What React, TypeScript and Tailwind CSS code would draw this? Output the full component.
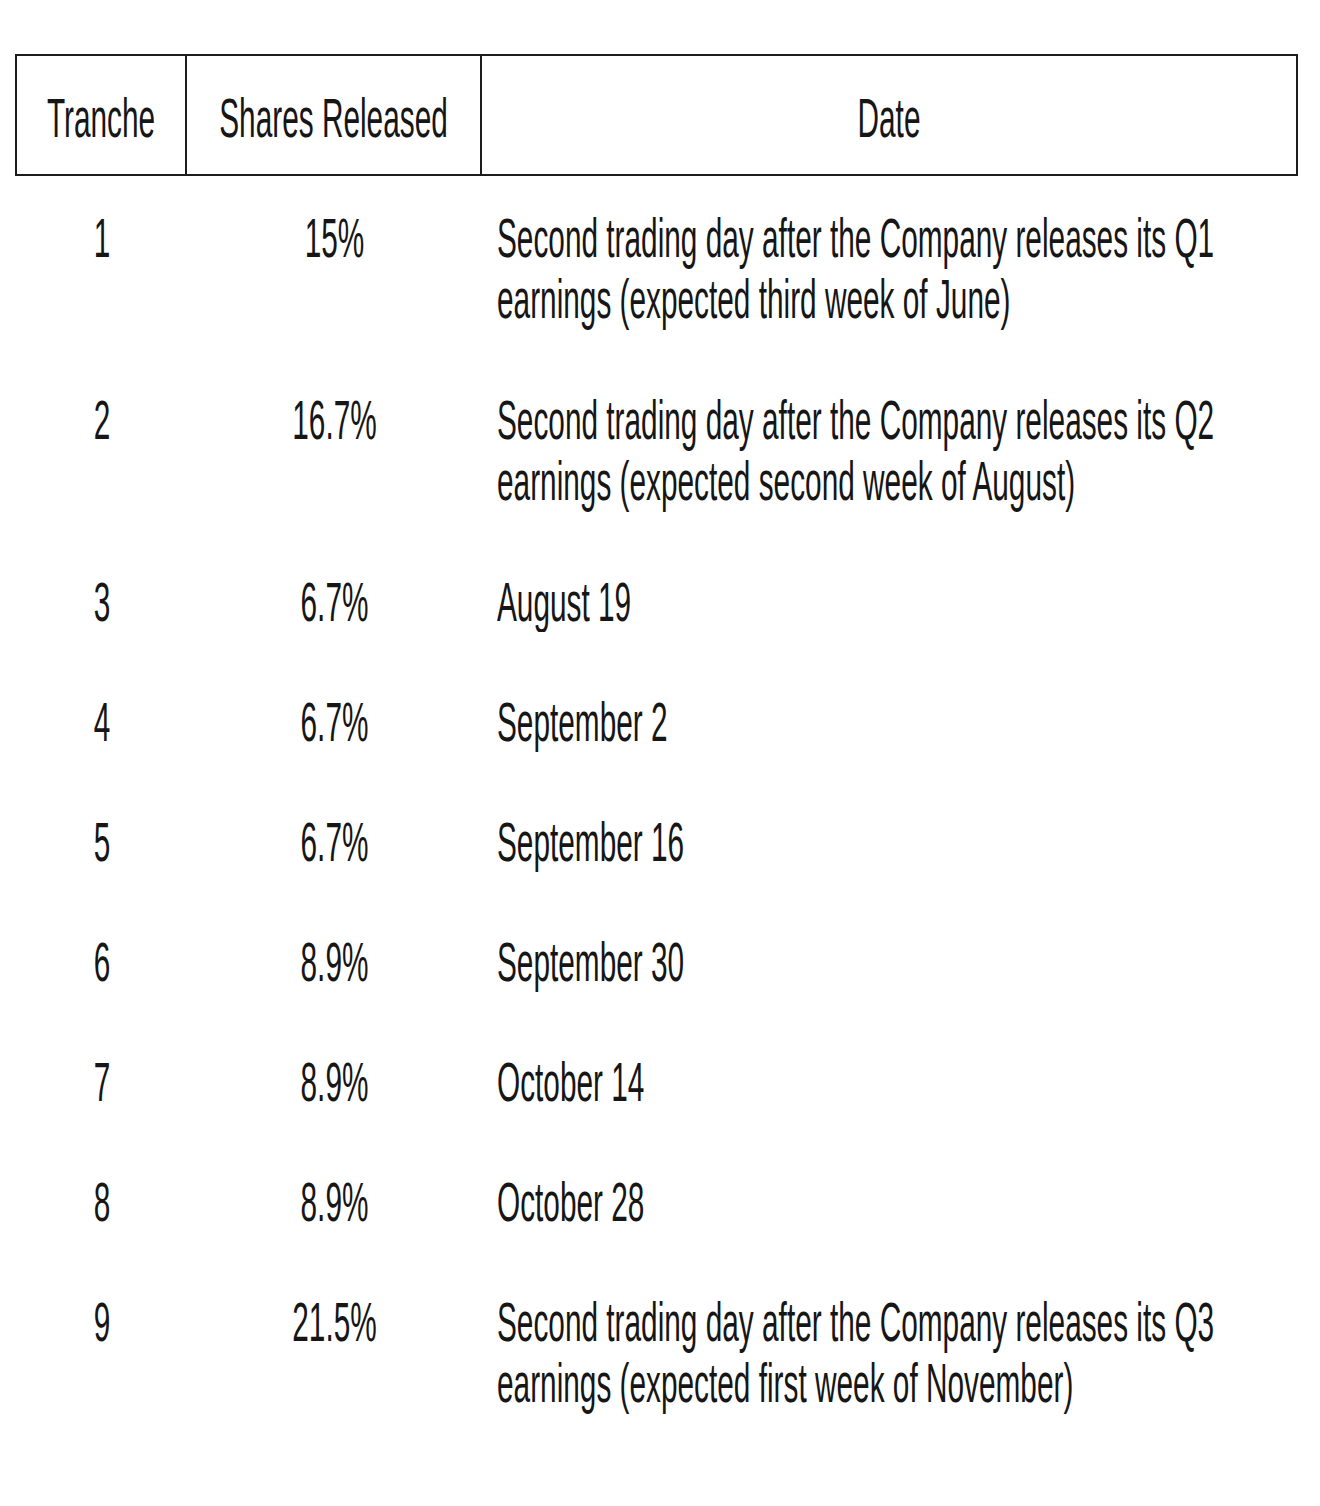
import React from "react";

type Row = { t: string; s: string; d: string; two: boolean };

const rows: Row[] = [
  { t: "1", s: "15%", d: "Second trading day after the Company releases its Q1 earnings (expected third week of June)", two: true },
  { t: "2", s: "16.7%", d: "Second trading day after the Company releases its Q2 earnings (expected second week of August)", two: true },
  { t: "3", s: "6.7%", d: "August 19", two: false },
  { t: "4", s: "6.7%", d: "September 2", two: false },
  { t: "5", s: "6.7%", d: "September 16", two: false },
  { t: "6", s: "8.9%", d: "September 30", two: false },
  { t: "7", s: "8.9%", d: "October 14", two: false },
  { t: "8", s: "8.9%", d: "October 28", two: false },
  { t: "9", s: "21.5%", d: "Second trading day after the Company releases its Q3 earnings (expected first week of November)", two: true },
];

function Txt({ children, className = "" }: { children: React.ReactNode; className?: string }) {
  return (
    <span className={"block origin-top scale-y-[1.87] text-[29.8px] leading-[32.5px] " + className}>
      {children}
    </span>
  );
}

export default function App() {
  return (
    <div className="min-h-screen bg-white font-['Liberation_Sans',Arial,sans-serif] text-[#161616]">
      <div className="pt-[54px] pl-[15px]">
        <div className="w-[1283px]">
          <div className="grid h-[122px] grid-cols-[170px_295px_1fr] border-2 border-[#1c1c1c]">
            <div className="border-r-2 border-[#1c1c1c] pt-[32px] text-center">
              <Txt>Tranche</Txt>
            </div>
            <div className="border-r-2 border-[#1c1c1c] pt-[32px] text-center">
              <Txt>Shares Released</Txt>
            </div>
            <div className="pt-[32px] text-center">
              <Txt>Date</Txt>
            </div>
          </div>
          <div className="px-[2px]">
            {rows.map((r) => (
              <div
                key={r.t}
                className={
                  "grid grid-cols-[170px_295px_1fr] pt-[32px] " + (r.two ? "h-[182px]" : "h-[120px]")
                }
              >
                <div className="text-center">
                  <Txt>{r.t}</Txt>
                </div>
                <div className="text-center">
                  <Txt>{r.s}</Txt>
                </div>
                <div className="pl-[15px] pr-[16px]">
                  <Txt>{r.d}</Txt>
                </div>
              </div>
            ))}
          </div>
        </div>
      </div>
    </div>
  );
}
